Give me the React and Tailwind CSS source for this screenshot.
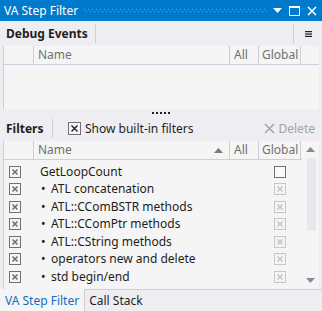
import React from "react";

const XBox = ({ disabled }) => (
  <svg width="12" height="12" viewBox="0 0 12 12">
    <rect x="0.5" y="0.5" width="11" height="11" fill="#F5F5F5" stroke={disabled ? "#C6C6C6" : "#717171"} />
    <path d="M3.5 3.5 L8.5 8.5 M8.5 3.5 L3.5 8.5" stroke={disabled ? "#C6C6C6" : "#717171"} strokeWidth="1.6" />
  </svg>
);

const EmptyBox = () => (
  <svg width="12" height="12" viewBox="0 0 12 12">
    <rect x="0.5" y="0.5" width="11" height="11" fill="#F9F9F9" stroke="#717171" />
  </svg>
);

const rows = [
  { name: "GetLoopCount", bullet: false, global: "empty" },
  { name: "ATL concatenation", bullet: true, global: "x" },
  { name: "ATL::CComBSTR methods", bullet: true, global: "x" },
  { name: "ATL::CComPtr methods", bullet: true, global: "x" },
  { name: "ATL::CString methods", bullet: true, global: "x" },
  { name: "operators new and delete", bullet: true, global: "x" },
  { name: "std begin/end", bullet: true, global: "x" },
];

const Header = ({ sort }) => (
  <div className="flex h-[19px] text-[#717171] border-b border-[#CCCEDB] bg-[#F5F5F5] shrink-0">
    <div className="w-[30px] border-r border-[#CCCEDB]"></div>
    <div className="w-[196px] border-r border-[#CCCEDB] pl-[4px] flex items-center justify-between pr-[6px]">
      <span>Name</span>
      {sort && (
        <svg width="9" height="5" viewBox="0 0 9 5">
          <path d="M0 5 L4.5 0 L9 5 Z" fill="#7A7A7A" />
        </svg>
      )}
    </div>
    <div className="w-[29px] border-r border-[#CCCEDB] pl-[4px] flex items-center">All</div>
    <div className="w-[42px] border-r border-[#CCCEDB] pl-[3px] flex items-center">Global</div>
  </div>
);

export default function App() {
  return (
    <div
      className="w-[322px] h-[311px] bg-[#EEEEF2] flex flex-col text-[12px] text-[#1E1E1E] overflow-hidden"
      style={{ fontFamily: '"Segoe UI", "Noto Sans", sans-serif' }}
    >
      {/* title bar */}
      <div className="h-[21px] bg-[#007ACC] flex items-center pl-[4px] pr-[5px] shrink-0">
        <span className="text-white leading-none">VA Step Filter</span>
        <svg className="flex-1 mx-[6px]" height="4">
          <defs>
            <pattern id="dots" width="4" height="4" patternUnits="userSpaceOnUse">
              <rect x="0" y="0" width="1" height="1" fill="#5DA9E0" />
              <rect x="2" y="2" width="1" height="1" fill="#5DA9E0" />
            </pattern>
          </defs>
          <rect x="0" y="0" width="100%" height="4" fill="url(#dots)" />
        </svg>
        <div className="flex items-center gap-[7px]">
          <svg width="9" height="5" viewBox="0 0 9 5">
            <path d="M0 0 L9 0 L4.5 5 Z" fill="#fff" />
          </svg>
          <svg width="11" height="10" viewBox="0 0 11 10">
            <rect x="0.5" y="1" width="10" height="8.5" fill="none" stroke="#fff" />
            <rect x="0" y="0" width="11" height="2" fill="#fff" />
          </svg>
          <svg width="10" height="10" viewBox="0 0 10 10">
            <path d="M1 1 L9 9 M9 1 L1 9" stroke="#fff" strokeWidth="1.6" />
          </svg>
        </div>
      </div>

      {/* debug events toolbar */}
      <div className="h-[25px] flex items-center shrink-0">
        <span className="font-bold pl-[6px] w-[95px]">Debug Events</span>
        <div className="w-px h-[19px] bg-[#CCCEDB]"></div>
        <div className="flex-1"></div>
        <div className="w-px h-[19px] bg-[#CCCEDB]"></div>
        <div className="w-[28px] flex justify-center">
          <svg width="7" height="6" viewBox="0 0 7 6">
            <rect x="0" y="0" width="7" height="1.2" fill="#1E1E1E" />
            <rect x="0" y="2.4" width="7" height="1.2" fill="#1E1E1E" />
            <rect x="0" y="4.8" width="7" height="1.2" fill="#1E1E1E" />
          </svg>
        </div>
      </div>

      {/* debug events list */}
      <div className="mx-[3px] h-[63px] bg-[#F5F5F5] border-l border-[#CCCEDB] flex flex-col shrink-0">
        <Header />
      </div>

      {/* splitter */}
      <div className="h-[7px] flex justify-center items-center shrink-0">
        <div className="flex gap-[2px]">
          {[0, 1, 2, 3, 4].map((i) => (
            <div key={i} className="w-[2px] h-[2px] bg-[#1E1E1E]"></div>
          ))}
        </div>
      </div>

      {/* filters toolbar */}
      <div className="h-[25px] flex items-center shrink-0">
        <span className="font-bold pl-[6px] w-[52px]">Filters</span>
        <div className="w-px h-[19px] bg-[#CCCEDB]"></div>
        <div className="flex items-center ml-[15px] gap-[4px]">
          <svg width="13" height="13" viewBox="0 0 13 13">
            <rect x="0.5" y="0.5" width="12" height="12" fill="#F5F5F5" stroke="#717171" />
            <path d="M3.5 3.5 L9.5 9.5 M9.5 3.5 L3.5 9.5" stroke="#1E1E1E" strokeWidth="1.4" />
          </svg>
          <span>Show built-in filters</span>
        </div>
        <div className="flex-1"></div>
        <div className="flex items-center gap-[4px] pr-[7px] text-[#A2A4A5]">
          <svg width="11" height="11" viewBox="0 0 11 11">
            <path d="M1 1 L10 10 M10 1 L1 10" stroke="#A2A4A5" strokeWidth="1.5" />
          </svg>
          <span>Delete</span>
        </div>
      </div>

      {/* filters list */}
      <div className="mx-[3px] flex-1 bg-[#F5F5F5] border-l border-b border-[#CCCEDB] flex min-h-0">
        <div className="flex-1 flex flex-col">
          <Header sort />
          <div className="flex flex-col pt-[3px]">
            {rows.map((r, i) => (
              <div key={i} className="h-[17.5px] flex items-center">
                <div className="w-[30px] flex pl-[5px]">
                  <XBox />
                </div>
                <div className="w-[196px] pl-[6px] flex items-center whitespace-nowrap">
                  {r.bullet && <span className="w-[11px] pl-[1px]">•</span>}
                  <span>{r.name}</span>
                </div>
                <div className="w-[29px]"></div>
                <div className="w-[42px] flex justify-center">
                  {r.global === "empty" ? <EmptyBox /> : <XBox disabled />}
                </div>
              </div>
            ))}
          </div>
        </div>
        {/* scrollbar */}
        <div className="w-[17px] flex flex-col items-center">
          <div className="h-[17px] flex items-center justify-center">
            <svg width="9" height="5" viewBox="0 0 9 5">
              <path d="M0 5 L4.5 0 L9 5 Z" fill="#868999" />
            </svg>
          </div>
          <div className="w-[9px] h-[73px] bg-[#E8E8EC] ml-[1px]"></div>
          <div className="flex-1"></div>
          <div className="h-[17px] flex items-center justify-center">
            <svg width="9" height="5" viewBox="0 0 9 5">
              <path d="M0 0 L9 0 L4.5 5 Z" fill="#868999" />
            </svg>
          </div>
        </div>
      </div>

      {/* tabs */}
      <div className="h-[22px] flex shrink-0 -mt-px">
        <div className="px-[5px] bg-[#F5F5F5] text-[#0E70C0] flex items-center border-r border-[#CCCEDB] border-t border-t-[#F5F5F5]">
          VA Step Filter
        </div>
        <div className="px-[4px] flex items-center border-t border-[#CCCEDB]">Call Stack</div>
        <div className="flex-1 border-t border-[#CCCEDB]"></div>
      </div>
    </div>
  );
}
